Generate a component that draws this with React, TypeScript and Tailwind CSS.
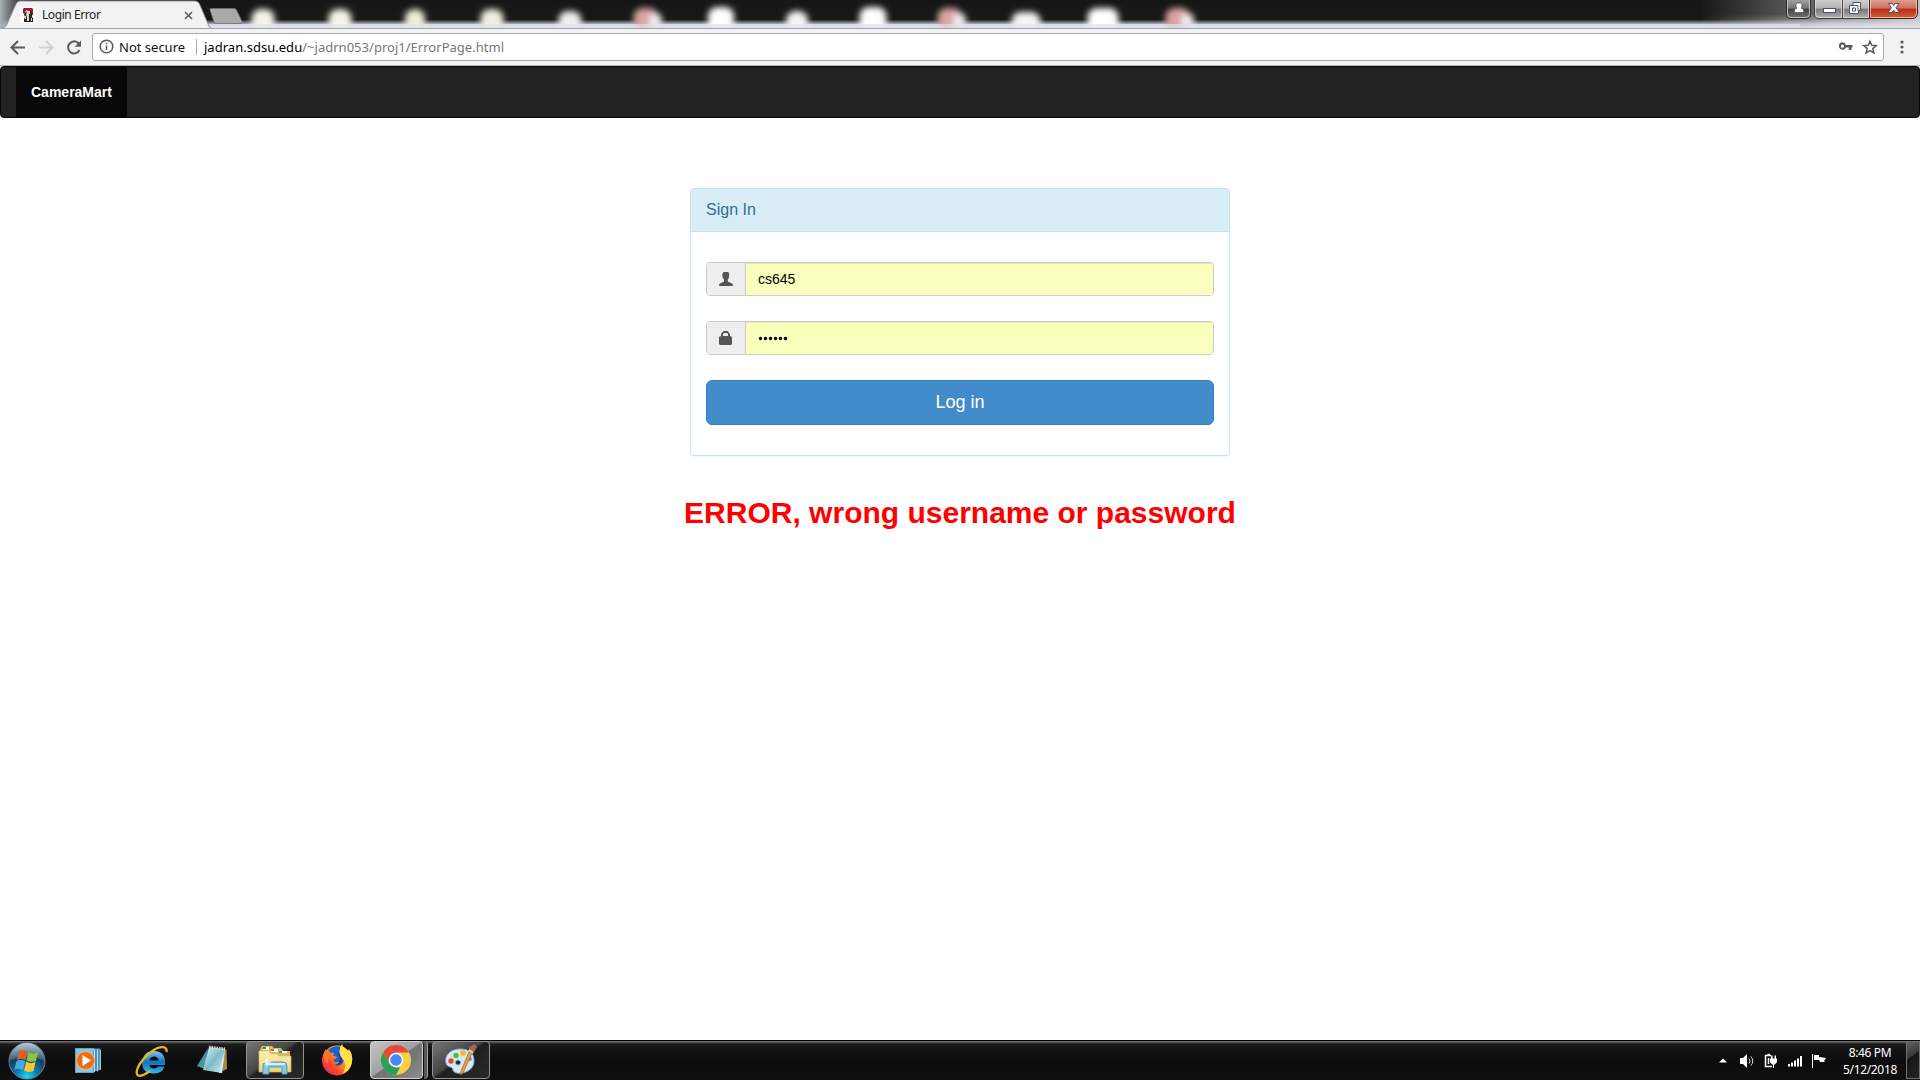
import React from "react";

const glows = [
  { x: 263, c: "#f4f4ea", w: 23, y: 9 }, { x: 340, c: "#f4f4ea", w: 23, y: 9 }, { x: 415, c: "#efeeda", w: 20, y: 9 },
  { x: 492, c: "#f0eee0", w: 23, y: 9 }, { x: 570, c: "#f0f0f0", w: 23, y: 11 }, { x: 646, c: "#d9a3a3", w: 25, y: 8 },
  { x: 721, c: "#ffffff", w: 26, y: 7 }, { x: 797, c: "#f5f5f5", w: 22, y: 11 }, { x: 873, c: "#ffffff", w: 27, y: 7 },
  { x: 950, c: "#d9a3a3", w: 25, y: 8 }, { x: 1026, c: "#f5f5f5", w: 29, y: 12 }, { x: 1103, c: "#ffffff", w: 31, y: 8 },
  { x: 1178, c: "#d9a3a3", w: 25, y: 8 },
];

function TitleGlass() {
  return (
    <svg className="absolute left-0 top-0" width="1920" height="28" viewBox="0 0 1920 28">
      <defs>
        <linearGradient id="tb" x1="0" y1="0" x2="0" y2="1">
          <stop offset="0" stopColor="#161616" /><stop offset="0.7" stopColor="#181818" />
          <stop offset="0.8" stopColor="#777a7e" /><stop offset="0.9" stopColor="#d3d7df" /><stop offset="1" stopColor="#dfe4ee" />
        </linearGradient>
        <linearGradient id="fadeR"><stop offset="0" stopColor="#999" stopOpacity="0" /><stop offset="0.5" stopColor="#999" stopOpacity="0.6" /><stop offset="1" stopColor="#c4c4c4" /></linearGradient>
        <linearGradient id="fadeL"><stop offset="0" stopColor="#aab1b5" /><stop offset="1" stopColor="#777" stopOpacity="0" /></linearGradient>
        <linearGradient id="floor" x1="0" y1="0" x2="0" y2="1"><stop offset="0" stopColor="#d8dbe0" stopOpacity="0" /><stop offset="1" stopColor="#dfe3ea" /></linearGradient>
        <linearGradient id="floorFade"><stop offset="0" stopColor="#fff" stopOpacity="0" /><stop offset="0.6" stopColor="#fff" /></linearGradient>
        <mask id="floorMask"><rect x="1700" width="220" height="28" fill="url(#floorFade)" /></mask>
        <filter id="b3" x="-50%" y="-80%" width="200%" height="260%"><feGaussianBlur stdDeviation="3" /></filter>
      </defs>
      <rect width="1920" height="28" fill="url(#tb)" />
      <rect width="30" height="28" fill="url(#fadeL)" />
      <rect x="1700" width="220" height="28" fill="url(#fadeR)" />
      <rect x="1700" y="14" width="220" height="14" fill="url(#floor)" mask="url(#floorMask)" />
      {glows.map((g) => (
        <g key={g.x} filter="url(#b3)">
          <rect x={g.x - g.w / 2} y={g.y} width={g.w} height={32 - g.y} rx="9" fill={g.c} />
          {g.c === "#d9a3a3" && <rect x={g.x + 3} y="14" width="13" height="14" rx="5" fill="#f0eeee" />}
        </g>
      ))}
      <rect x="200" y="24" width="1600" height="4" fill="#dde2eb" opacity="0.7" />
      <path d="M216 23.500 Q214.500 23.500 214 22 L210 10 Q209.500 8.500 211 8.500 H234 Q236 8.500 236.500 10 L242 21.500 Q242.500 23.500 241 23.500 Z" fill="#a9a9a9" stroke="#6f6f6f" strokeWidth="0.7" />
      <path d="M0 28.500 C4 28 6 27 7 24 L16 4 Q17.500 1 20 1 H195 Q198 1 199.500 4 L208 24 Q209 28 212 28.500 Z" fill="#f2f2f2" stroke="#8f9299" strokeWidth="1" />
    </svg>
  );
}

function TabIcon() {
  return (
    <svg width="16" height="16" viewBox="0 0 16 16" className="shrink-0">
      <rect width="16" height="16" fill="#fff" />
      <path d="M4 1H12L13 2V8H11V5L9 3H7L5 5V7L3 6V2Z" fill="#b30d2c" />
      <path d="M6 5 8 3 11 4 12 7 12 10 13 11V15H4V12L5 10 4 7Z" fill="#2d2522" />
      <path d="M7 4H10V7H9V14H7V10L6 8ZM5 9H6V12H5ZM11 11H12V14H11Z" fill="#ddd8ce" />
    </svg>
  );
}

function WindowButtons() {
  return (
    <svg className="absolute left-[1784px] top-0" width="136" height="20" viewBox="0 0 136 20">
      <defs>
        <linearGradient id="wg" x1="0" y1="0" x2="0" y2="1"><stop offset="0" stopColor="#a6a6a6" /><stop offset="0.48" stopColor="#747474" /><stop offset="0.5" stopColor="#3f3f3f" /><stop offset="1" stopColor="#777" /></linearGradient>
        <linearGradient id="wl" x1="0" y1="0" x2="0" y2="1"><stop offset="0" stopColor="#d2d2d2" /><stop offset="0.48" stopColor="#b0b0b0" /><stop offset="0.5" stopColor="#767676" /><stop offset="1" stopColor="#b4b4b4" /></linearGradient>
        <linearGradient id="wr" x1="0" y1="0" x2="0" y2="1"><stop offset="0" stopColor="#e2a297" /><stop offset="0.48" stopColor="#cc6f5d" /><stop offset="0.5" stopColor="#b52f14" /><stop offset="1" stopColor="#d8603c" /></linearGradient>
      </defs>
      <path d="M2.500 -1 V14 Q2.500 18.500 7 18.500 H22 Q26.500 18.500 26.500 14 V-1Z" fill="url(#wg)" stroke="#272727" />
      <path d="M3.500 -1 V14 Q3.500 17.500 7 17.500 H22 Q25.500 17.500 25.500 14 V-1" fill="none" stroke="#d8d8d8" strokeOpacity="0.8" />
      <path d="M30.500 -1 V14 Q30.500 18.500 35 18.500 H85.500 V-1Z" fill="url(#wl)" stroke="#3a3a3a" />
      <path d="M85.500 -1 V18.500 H128 Q133.500 18.500 133.500 13 V-1Z" fill="url(#wr)" stroke="#4a2020" />
      <path d="M31.500 0 V14 Q31.500 17.500 35 17.500 H57.500 V0 M59.500 0 V17.500 H84.500 V0 M86.500 0 V17.500 H128 Q132.500 17.500 132.500 13 V0" fill="none" stroke="#f1e8e8" strokeOpacity="0.65" />
      <path d="M58.500 0V18" stroke="#444" />
      <path d="M10.500 12.500V9.500L13 8 12 7V4L13 3H17L18 4V7L17 8L19.500 9.500V12.500Z" fill="#fff" stroke="#55555d" strokeWidth="0.8" />
      <rect x="39.500" y="8.500" width="12" height="4" fill="#fff" stroke="#4e5068" />
      <path d="M69 2.500H76.500V10.500H74.500V13.500H65.500V5.500H69Z" fill="#fff" stroke="#4e5068" />
      <path d="M67.500 5.500H74V11M68.500 8H71.500V11H68.500Z" fill="none" stroke="#4e5068" />
      <path d="M104.500 3.500H108.500L109.800 5.500 111 3.500H115L112 7.800 115.500 12.500H111.500L109.800 10.200 108 12.500H104L107.500 7.800Z" fill="#fff" stroke="#5b4d60" strokeWidth="1" />
    </svg>
  );
}

function Chrome() {
  return (
    <header className="flex h-[66px] flex-col bg-[#f2f2f2] font-['Noto_Sans','Open_Sans',sans-serif]">
      <div className="relative h-7 shrink-0">
        <TitleGlass />
        <div className="relative flex h-full w-[212px] items-center pl-5 pt-0.5">
          <TabIcon />
          <span className="ml-1.5 w-[142px] whitespace-nowrap text-[12px] leading-4 tracking-[-0.42px] text-[#222]">Login Error</span>
          <svg width="9" height="9" viewBox="0 0 9 9"><path d="M1 1 8 8M8 1 1 8" stroke="#5a5a5a" strokeWidth="1.5" /></svg>
        </div>
        <WindowButtons />
      </div>
      <div className="flex h-[38px] items-center border-b border-t border-b-[#b4b4b4] border-t-[#a1a4b0] pb-px">
        <svg width="92" height="28" viewBox="0 0 92 28" className="shrink-0" fill="none" strokeWidth="2">
          <path d="M25 14.500H12M18 8 11.500 14.500 18 21" stroke="#5a5a5a" />
          <path d="M39 14.500H52M46 8 52.500 14.500 46 21" stroke="#d2d2d2" />
          <path d="M79.500 17A6 6 0 1 1 78 9.800L80 12" stroke="#5a5a5a" />
          <path d="M81 7.500V13.800H74.700Z" fill="#5a5a5a" stroke="none" />
        </svg>
        <div className="flex h-7 w-[1792px] items-center rounded-[3px] border border-[#a9a9a9] bg-white pl-1.5">
          <svg width="15" height="15" viewBox="0 0 15 15" fill="none" stroke="#5a5a5a" strokeWidth="1.500"><circle cx="7.500" cy="7.500" r="6.300" /><path d="M7.500 6.500V11M7.500 3.700V5.200" /></svg>
          <span className="ml-[5px] w-[77px] whitespace-nowrap pt-0.5 text-[13px] text-[#111]">Not secure</span>
          <span className="h-4 w-px bg-[#aaa]" />
          <span className="ml-[7px] grow whitespace-nowrap pt-0.5 text-[13px] tracking-[0.02px] text-[#777]"><span className="text-black">jadran.sdsu.edu</span>/~jadrn053/proj1/ErrorPage.html</span>
          <svg width="46" height="20" viewBox="0 0 46 20" className="-mr-px">
            <path fillRule="evenodd" d="M4.500 5.300A3.700 3.700 0 0 1 8 8H14.500V10.500H13.500V13H10.800V10.500H8A3.700 3.700 0 1 1 4.500 5.300ZM4.500 7.500A1.600 1.600 0 1 0 4.500 10.800 1.600 1.600 0 0 0 4.500 7.500Z" fill="#5a5a5a" />
            <path d="M32 4.200 33.700 8.300 38.200 8.700 34.800 11.600 35.900 16 32 13.600 28.100 16 29.200 11.600 25.800 8.700 30.300 8.300Z" fill="none" stroke="#5a5a5a" strokeWidth="1.500" />
          </svg>
        </div>
        <svg width="4" height="16" viewBox="0 0 4 16" className="ml-[16px] mt-px" fill="#5a5a5a"><circle cx="2" cy="3" r="1.600" /><circle cx="2" cy="8" r="1.600" /><circle cx="2" cy="13" r="1.600" /></svg>
      </div>
    </header>
  );
}

function Field({ icon, children }: { icon: React.ReactNode; children: React.ReactNode }) {
  return (
    <div className="flex h-[34px] overflow-hidden rounded border border-[#ccc]">
      <div className="flex w-[39px] shrink-0 items-center justify-center border-r border-[#ccc] bg-[#eee]">{icon}</div>
      <div className="flex grow items-center bg-[#faffbd] pl-3 text-[14px] text-black shadow-[inset_0_1px_1px_rgba(0,0,0,0.1)]">{children}</div>
    </div>
  );
}

function Login() {
  return (
    <main className="flex h-[974px] flex-col items-center bg-white font-['Liberation_Sans',Arial,sans-serif]">
      <nav className="flex h-[52px] w-full shrink-0 rounded border border-[#080808] bg-[#222] pl-[15px]">
        <div className="flex w-[111px] items-center bg-[#080808] pl-[15px] text-[14px] font-bold text-white">CameraMart</div>
      </nav>
      <section className="mt-[70px] h-[268px] w-[540px] shrink-0 rounded border border-[#bce8f1] shadow-[0_1px_1px_rgba(0,0,0,0.05)]">
        <h1 className="flex h-[43px] items-center rounded-t-[3px] border-b border-[#bce8f1] bg-[#d9edf7] pl-[15px] text-[16px] text-[#31708f]">Sign In</h1>
        <div className="flex flex-col gap-[25px] px-[15px] pt-[30px]">
          <Field icon={<svg width="14" height="14" viewBox="0 0 14 14"><path d="M4.500 0H9.300L10.300 2.500 9.800 6 8.800 7.500V9.500L13.500 11.700 14 14H0L.5 11.700 5 9.500V7.500L3.800 6 3.200 2.500Z" fill="#555" /></svg>}>cs645</Field>
          <Field icon={<svg width="13" height="14" viewBox="0 0 13 14" className="mr-px"><path fillRule="evenodd" d="M2 5V3L4.500 0H8.500L11 3V5L13 6V13L12 14H1L0 13V6ZM4 5H9V3L8 2H5L4 3Z" fill="#555" /></svg>}>
            <svg width="30" height="6" viewBox="0 0 30 6">{[2.5, 7.5, 12.5, 17.5, 22.5, 27.5].map((x) => <circle key={x} cx={x} cy="3.500" r="1.700" />)}</svg>
          </Field>
          <button className="h-[45px] rounded-md border border-[#357ebd] bg-[#428bca] text-[18px] text-white">Log in</button>
        </div>
      </section>
      <p className="mt-[39px] whitespace-nowrap text-[30px] font-bold leading-9 text-[#f00]">ERROR, wrong username or password</p>
    </main>
  );
}

function Orb() {
  return (
    <svg width="38" height="38" viewBox="0 0 38 38">
      <defs>
        <radialGradient id="orb" cx=".5" cy=".95" r=".85"><stop offset="0" stopColor="#16dcff" /><stop offset=".35" stopColor="#087fae" /><stop offset=".7" stopColor="#12405f" /><stop offset="1" stopColor="#647f92" /></radialGradient>
        <linearGradient id="orbHi" x1="0" y1="0" x2="0" y2="1"><stop offset="0" stopColor="#b8cbd8" /><stop offset="1" stopColor="#55758b" stopOpacity=".5" /></linearGradient>
      </defs>
      <circle cx="19" cy="19" r="18" fill="url(#orb)" stroke="#6f8290" />
      <path d="M2 18A17 17 0 0 1 36 18Q19 12 2 18Z" fill="url(#orbHi)" />
      <path d="M11 9.500Q15 7 19.500 9.500L17.500 18Q13 15.500 9 18Z" fill="#e85a24" />
      <path d="M20.500 10Q24 13 30 10.500L28 19Q22.500 21 18.500 18.200Z" fill="#8cc43c" />
      <path d="M8.600 19Q12.500 17 17.200 19.200L15 28Q10.500 25.500 6.500 28Z" fill="#47a7e4" />
      <path d="M18.300 19.500Q22 22.500 27.500 20L25.500 29Q19.500 31 16 28.500Z" fill="#fcc52c" />
    </svg>
  );
}
function Player() {
  return (
    <svg width="27" height="27" viewBox="0 0 27 27">
      <path d="M17 1.500H25.500V23L17 25Z" fill="#4b90bb" /><path d="M19.500 2V25M22.500 2V24.500M25.300 3V23" stroke="#b9e1f4" />
      <rect x=".5" y="1.500" width="18" height="24" fill="#8dc4e2" stroke="#5fa4cc" />
      <circle cx="10.500" cy="13.500" r="9" fill="#ee6b13" stroke="#ffb168" /><path d="M7.500 8 16 13.500 7.500 19Z" fill="#fff" />
    </svg>
  );
}
function Explorer() {
  return (
    <svg width="34" height="32" viewBox="0 0 34 32">
      <defs><linearGradient id="ie" x1="0" y1="0" x2="0" y2="1"><stop offset="0" stopColor="#77c9f5" /><stop offset=".5" stopColor="#1172bd" /><stop offset="1" stopColor="#35b8f2" /></linearGradient></defs>
      <path d="M30 20H14.500Q15 23.500 19 23.500 22 23.500 23 21.500H29.500Q27 28.500 19 28.500 7 28.500 7 17.500 8 6 19 6 31 6 30 20ZM14.500 15.500H23.500Q23 11.500 19 11.500 15 11.500 14.500 15.500Z" fill="url(#ie)" fillRule="evenodd" />
      <path d="M31.500 7Q32.500 1.500 26 2.200C17 3.500 4 17 2 25 0 34 8 31 15 26" fill="none" stroke="#edb31d" strokeWidth="2.300" />
    </svg>
  );
}
function Notepad() {
  return (
    <svg width="32" height="32" viewBox="0 0 32 32">
      <defs><linearGradient id="np" x1="0" y1="0" x2="1" y2="1"><stop offset="0" stopColor="#e4f6f7" /><stop offset=".5" stopColor="#7dbac6" /><stop offset="1" stopColor="#d4f1f3" /></linearGradient></defs>
      <path d="M26 4 29.500 6 30 25 26 27Z" fill="#a9874b" /><path d="M11 4 0 22 8 25Z" fill="#4d929c" />
      <path d="M12 3 28 5 25 29 6 26Z" fill="url(#np)" /><path d="M28 5 25 29 22 28.500Z" fill="#d6eef0" /><path d="M12 3 28 5" stroke="#d8d8d8" strokeWidth="3" strokeDasharray="1.500 1" />
    </svg>
  );
}
function Folder() {
  return (
    <svg width="34" height="32" viewBox="0 0 34 32">
      <defs><linearGradient id="fo" x1="0" y1="0" x2="0" y2="1"><stop offset="0" stopColor="#fff2b2" /><stop offset="1" stopColor="#ebd477" /></linearGradient></defs>
      <path d="M2 6 4 2H14L16 4H23L25 7H32V27H2Z" fill="#d8bb5e" /><path d="M5 3H11V6H5ZM13 5H20V8H13ZM21 7H29V9H21Z" fill="#fff" />
      <path d="M5 3H8V5H5Z" fill="#09a832" /><path d="M13 5H16V7H13Z" fill="#d85d32" /><path d="M21 7H24V9H21Z" fill="#169bd8" />
      <path d="M1 7H11L13 10H19L21 12H33V28H1Z" fill="url(#fo)" stroke="#d6bd63" strokeWidth=".7" />
      <path d="M5 30V22Q5 18 9 18H25Q29 18 29 22V30H24V23H11V30Z" fill="#8ac6e2" stroke="#4d9dc8" /><path d="M7 20H27" stroke="#d0f1fb" strokeWidth="2" />
      <path d="M9 12 10 17 15 18 10 19 9 24 8 19 3 18 8 17Z" fill="#fff" opacity=".8" />
    </svg>
  );
}
function Firefox() {
  return (
    <svg width="32" height="32" viewBox="0 0 32 32">
      <defs>
        <linearGradient id="ff" x1=".9" y1=".1" x2=".1" y2=".9"><stop offset="0" stopColor="#ffe23c" /><stop offset=".4" stopColor="#ff9a20" /><stop offset=".7" stopColor="#ff4a26" /><stop offset="1" stopColor="#e6265f" /></linearGradient>
      </defs>
      <circle cx="16" cy="16.500" r="15" fill="url(#ff)" />
      <path d="M7 6Q12 1 19 2.500L21 8Q25 13 22 19 18 24 13 20.500 17 20.500 18.500 18 14 19 11.500 15.500 14 16 16 13L12 11.500 13 9 9.500 9Z" fill="#1b62cf" />
      <path d="M16 8Q22 10 21.500 16 20 21 15 21 19 19 19 15 19 11 16 8Z" fill="#19358c" />
      <path d="M2.500 10 4.500 5 7 9 12 8.500 10 11.500 7 14 7 20Q2 16 2.500 10Z" fill="#ff7324" />
      <path d="M21 0Q22 4 27 7L28 5Q33 12 30.500 20 28 27 22 29.500 26 22 23 17 18 11 18.500 7 19 3 21 0Z" fill="#ffe14a" />
    </svg>
  );
}
function ChromeLogo() {
  return (
    <svg width="30" height="30" viewBox="0 0 30 30">
      <circle cx="15" cy="15" r="15" fill="#fbcf45" />
      <path d="M2 7.500A15 15 0 0 1 28 7.500H15L8.500 18.750Z" fill="#df4b3f" />
      <path d="M2 7.500 8.500 18.750 15 22.500H19L15 30A15 15 0 0 1 2 7.500Z" fill="#29a15a" />
      <circle cx="15" cy="15" r="7.300" fill="#f5f5f5" /><circle cx="15" cy="15" r="5.700" fill="#4285f4" />
    </svg>
  );
}
function Paint() {
  return (
    <svg width="34" height="33" viewBox="0 0 34 33">
      <path fillRule="evenodd" d="M16 6C6 6 0 13 2 20 3 25 9 23 9 27 10 33 30 31 30 18 30 9 24 6 16 6ZM14 17A2.500 2.500 0 1 1 14 22 2.500 2.500 0 0 1 14 17Z" fill="#d3eaf5" stroke="#7caec9" />
      <circle cx="7" cy="18" r="2.700" fill="#e34536" /><circle cx="12" cy="12.500" r="2.700" fill="#58b832" /><circle cx="19" cy="10" r="2.800" fill="#f6b71c" /><circle cx="26" cy="16" r="2" fill="#4aa0df" />
      <path d="M28 10 19 30 16.500 32 17 28 25 9Z" fill="#ef9a3b" stroke="#a95f22" strokeWidth=".7" /><path d="M25 8 25 4 31 1 33 4 30 9 28 10Z" fill="#a46a48" /><path d="M25 7 29 10" stroke="#d8d8d8" strokeWidth="2" />
    </svg>
  );
}

function Taskbar() {
  return (
    <footer className="flex h-10 border-t border-black bg-[linear-gradient(#707070_0,#707070_1px,#2d2d2d_2px,#161616_5px,#0c0c0c_50%,#101010_100%)] font-['Noto_Sans','Open_Sans',sans-serif] text-white">
      <div className="flex w-[246px] shrink-0 items-center">
        <div className="ml-2"><Orb /></div><div className="ml-[29px]"><Player /></div><div className="ml-[33px]"><Explorer /></div><div className="mb-0.5 ml-[28px]"><Notepad /></div>
      </div>
      <div className="flex h-[38px] w-[58px] shrink-0 items-center justify-center rounded-sm border border-[#929292] bg-[linear-gradient(145deg,#777_0%,#444_45%,#202020_50%,#292929_100%)]"><Folder /></div>
      <div className="flex w-[66px] shrink-0 items-center justify-center pb-0.5"><Firefox /></div>
      <div className="flex h-[38px] w-[53px] shrink-0 items-center justify-center rounded-sm border border-[#d1d1d1] bg-[linear-gradient(145deg,#c5c5c5_0%,#a2a2a2_48%,#727272_51%,#8c8c8c_100%)] pr-px"><ChromeLogo /></div>
      <div className="ml-px h-[38px] w-1 shrink-0 rounded-r-sm border-r border-[#a1a1a1] bg-[#565656]" />
      <div className="ml-1 flex h-[38px] w-[58px] shrink-0 items-center justify-center rounded-sm border border-[#929292] bg-[linear-gradient(145deg,#777_0%,#444_45%,#202020_50%,#292929_100%)] pb-0.5"><Paint /></div>
      <div className="grow" />
      <div className="flex items-center">
        <svg width="110" height="22" viewBox="0 0 110 22" fill="#fff" className="mr-3.5">
          <path d="M0 12.500 4 8.500 8 12.500Z" />
          <path d="M21 8H24L28 4V18L24 14H21Z" /><path d="M30 8.500Q32 11 30 13.500M32 6.500Q35.500 11 32 15.500" fill="none" stroke="#ddd" />
          <path d="M52 5.500H46.500V16.500H53M49.500 8V14M48.500 4.500H51" fill="none" stroke="#fff" strokeWidth="1.500" />
          <path d="M51 8.500H58V12L56 14.500H53L51 12ZM52 5.500H53.500V8.500H52ZM55.500 5.500H57V8.500H55.500ZM54 14H55V18H54Z" />
          <path d="M69 14H71V16.500H69ZM72 12.500H74V16.500H72ZM75 10.500H77V16.500H75ZM78 8.500H80V16.500H78ZM81 6H83V16.500H81Z" />
          <path d="M93 4H94V18H93ZM95 5H100V7L107 8 105 11 106 12H101L100 10H95Z" />
        </svg>
        <div className="mr-[9px] mt-px w-[54px] whitespace-nowrap text-center text-[12px] leading-[17px] tracking-[-0.35px]"><div>8:46 PM</div><div>5/12/2018</div></div>
      </div>
      <div className="h-[38px] w-[14px] shrink-0 self-start border border-[#717171] bg-[linear-gradient(145deg,#666_0%,#383838_38%,#151515_42%,#252525_100%)]" />
    </footer>
  );
}

export default function App() {
  return <div className="h-[1080px] w-[1920px] overflow-hidden bg-white"><Chrome /><Login /><Taskbar /></div>;
}
